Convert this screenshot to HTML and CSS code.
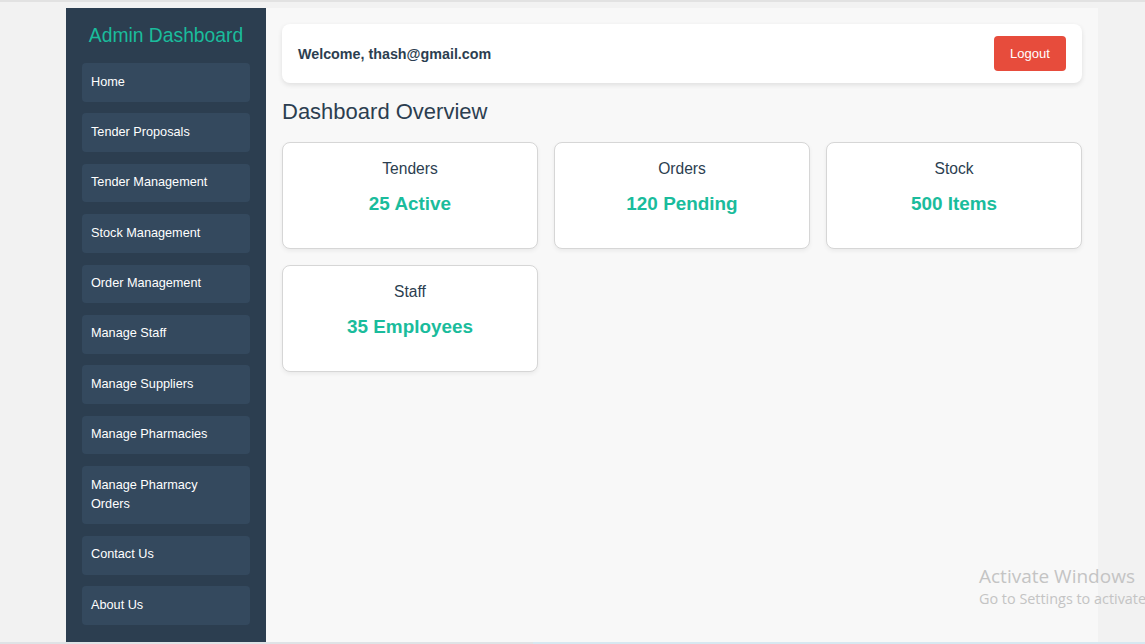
FILE: index.html
```html
<!DOCTYPE html>
<html lang="en">
<head>
<meta charset="utf-8">
<title>Admin Dashboard</title>
<link rel="stylesheet" href="styles.css">
</head>
<body>
<div class="topline"></div>
<div class="app">
  <aside class="sidebar">
    <h2 class="brand">Admin Dashboard</h2>
    <nav class="nav">
      <a class="nav-item" href="#">Home</a>
      <a class="nav-item" href="#">Tender Proposals</a>
      <a class="nav-item" href="#">Tender Management</a>
      <a class="nav-item" href="#">Stock Management</a>
      <a class="nav-item" href="#">Order Management</a>
      <a class="nav-item" href="#">Manage Staff</a>
      <a class="nav-item" href="#">Manage Suppliers</a>
      <a class="nav-item" href="#">Manage Pharmacies</a>
      <a class="nav-item" href="#">Manage Pharmacy Orders</a>
      <a class="nav-item" href="#">Contact Us</a>
      <a class="nav-item" href="#">About Us</a>
    </nav>
  </aside>
  <main class="main">
    <header class="topbar">
      <span class="welcome">Welcome, thash@gmail.com</span>
      <button class="logout">Logout</button>
    </header>
    <h1 class="page-title">Dashboard Overview</h1>
    <section class="cards">
      <div class="card"><h3 class="card-title">Tenders</h3><p class="card-value">25 Active</p></div>
      <div class="card"><h3 class="card-title">Orders</h3><p class="card-value">120 Pending</p></div>
      <div class="card"><h3 class="card-title">Stock</h3><p class="card-value">500 Items</p></div>
      <div class="card"><h3 class="card-title">Staff</h3><p class="card-value">35 Employees</p></div>
    </section>
  </main>
</div>
<div class="taskbar-edge"><span class="edge-gray"></span><span class="edge-blue"></span></div>
<div class="watermark">
  <div class="wm-title">Activate Windows</div>
  <div class="wm-sub">Go to Settings to activate</div>
</div>
</body>
</html>
```

FILE: styles.css
```css
* { box-sizing: border-box; }
html, body { margin: 0; padding: 0; }
body {
  background: #f2f2f2;
  font-family: "Liberation Sans", Arial, sans-serif;
  height: 644px;
  overflow: hidden;
  position: relative;
}
.topline { height: 2px; background: #e2e2e2; }
.app {
  display: flex;
  margin: 6px 0 0 66px;
  width: 1032px;
  height: 634px;
}
.sidebar {
  width: 200px;
  background: #2c3e50;
  padding: 17px 16px 16px;
  display: flex;
  flex-direction: column;
}
.brand {
  margin: 0 0 16px;
  color: #1abc9c;
  font-weight: normal;
  font-size: 19.3px;
  line-height: 22px;
  text-align: center;
}
.nav { display: flex; flex-direction: column; gap: 11.7px; }
.nav-item {
  display: block;
  background: #34495e;
  color: #ffffff;
  text-decoration: none;
  font-size: 12.7px;
  line-height: 19.5px;
  padding: 9.6px 14px 9.6px 9px;
  border-radius: 4px;
}
.main {
  flex: 1;
  background: #f8f8f8;
  padding: 16px;
}
.topbar {
  display: flex;
  align-items: center;
  justify-content: space-between;
  background: #ffffff;
  border-radius: 8px;
  padding: 12px 16px;
  box-shadow: 0 2px 5px rgba(0,0,0,0.1);
}
.welcome {
  font-weight: bold;
  font-size: 14.3px;
  color: #2c3e50;
}
.logout {
  background: #e74c3c;
  color: #ffffff;
  border: none;
  border-radius: 4px;
  height: 35px;
  width: 72px;
  font-family: "Liberation Sans", Arial, sans-serif;
  font-size: 13px;
  padding: 0;
}
.page-title {
  margin: 16px 0 17px;
  font-size: 22px;
  font-weight: normal;
  line-height: 26px;
  color: #2c3e50;
}
.cards {
  display: grid;
  grid-template-columns: repeat(3, 1fr);
  gap: 16px;
}
.card {
  background: #ffffff;
  border: 1px solid #d6d6d6;
  border-radius: 8px;
  box-shadow: 0 2px 4px rgba(0,0,0,0.06);
  padding: 17px 16px 33px;
  text-align: center;
  height: 107px;
}
.card-title {
  margin: 0;
  font-size: 15.6px;
  font-weight: normal;
  line-height: 18px;
  color: #2c3e50;
}
.card-value {
  margin: 15px 0 0;
  font-size: 18.9px;
  font-weight: bold;
  line-height: 22px;
  color: #1abc9c;
}
.taskbar-edge {
  position: absolute;
  left: 0;
  right: 0;
  bottom: 0;
  height: 2px;
  display: flex;
}
.edge-gray { width: 533px; background: #dfe3e6; }
.edge-blue { flex: 1; background: #d7e8f1; }
.watermark {
  position: absolute;
  left: 979px;
  top: 564px;
  white-space: nowrap;
  color: #c4c4c4;
  font-family: "Open Sans", "Noto Sans", sans-serif;
}
.wm-title { font-size: 19px; line-height: 24px; }
.wm-sub { font-size: 14.4px; line-height: 22px; }
```
